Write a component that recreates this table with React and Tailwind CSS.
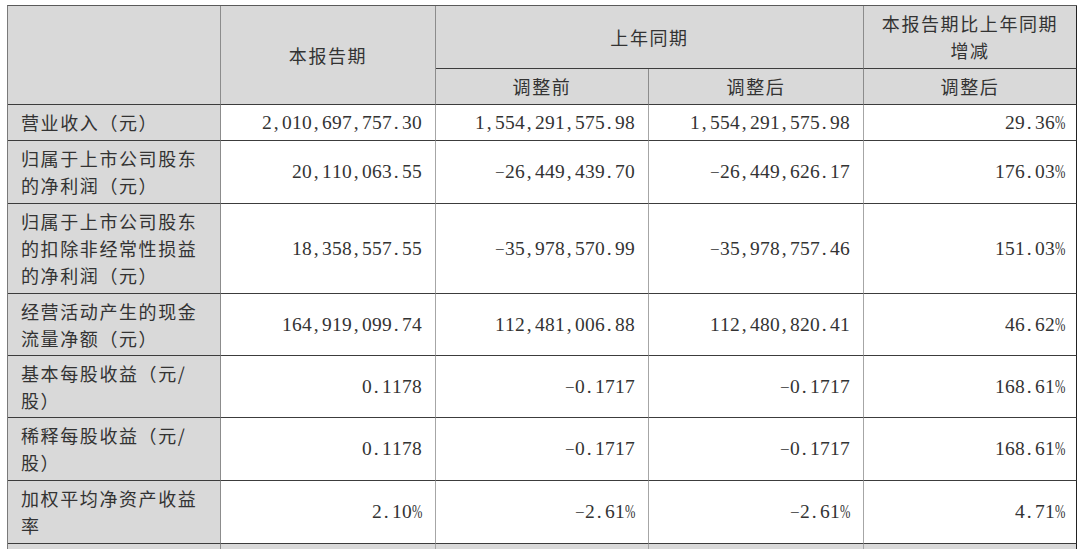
import * as React from "react";

// 主要会计数据表格
const rows = [
  {
    label: ["营业收入（元）"],
    values: ["2,010,697,757.30", "1,554,291,575.98", "1,554,291,575.98", "29.36%"],
  },
  {
    label: ["归属于上市公司股东", "的净利润（元）"],
    values: ["20,110,063.55", "−26,449,439.70", "−26,449,626.17", "176.03%"],
  },
  {
    label: ["归属于上市公司股东", "的扣除非经常性损益", "的净利润（元）"],
    values: ["18,358,557.55", "−35,978,570.99", "−35,978,757.46", "151.03%"],
  },
  {
    label: ["经营活动产生的现金", "流量净额（元）"],
    values: ["164,919,099.74", "112,481,006.88", "112,480,820.41", "46.62%"],
  },
  {
    label: ["基本每股收益（元/", "股）"],
    values: ["0.1178", "−0.1717", "−0.1717", "168.61%"],
  },
  {
    label: ["稀释每股收益（元/", "股）"],
    values: ["0.1178", "−0.1717", "−0.1717", "168.61%"],
  },
  {
    label: ["加权平均净资产收益", "率"],
    values: ["2.10%", "−2.61%", "−2.61%", "4.71%"],
  },
];

const Num = ({ value }) => (
  <span className="flex items-baseline font-['Liberation_Serif',serif] text-[19.5px] leading-none">
    {value.split("").map((c, i) => {
      if (c === "%")
        return (
          <span key={i} className="inline-block w-[10px]">
            <span className="inline-block origin-left scale-x-[0.64]">%</span>
          </span>
        );
      if (c === "−")
        return (
          <span key={i} className="inline-block w-[10px] text-center text-[17px]">
            {c}
          </span>
        );
      return (
        <span key={i} className="inline-block w-[10px] text-center">
          {c}
        </span>
      );
    })}
  </span>
);

const head =
  "bg-[#d9d9d9] border-r border-b border-r-[#8c8c8c] border-b-[#3c3c3c] flex flex-col items-center justify-center";

export default function App() {
  return (
    <div className="w-[1080px] h-[549px] overflow-hidden bg-white text-[#333333] font-['Noto_Sans_CJK_SC',sans-serif]">
      <div className="ml-[7px] mt-[5px] w-max border-l border-t border-l-[#7a7a7a] border-t-[#5a5a5a] grid grid-cols-[213px_215px_213px_215px_213px] grid-rows-[63px_36px_36px_63px_90px_62px_62px_63px_63px_40px] text-[18px] tracking-[1.6px]">
        {/* Header */}
        <div className={`${head} row-span-2`} />
        <div className={`${head} row-span-2`}>本报告期</div>
        <div className={`${head} col-span-2`}>上年同期</div>
        <div className={`${head} border-r-[#222222] leading-[27px]`}>
          <span>本报告期比上年同期</span>
          <span>增减</span>
        </div>
        <div className={head}>调整前</div>
        <div className={head}>调整后</div>
        <div className={`${head} border-r-[#222222]`}>调整后</div>

        {/* Body */}
        {rows.map((row) => (
          <React.Fragment key={row.label.join("")}>
            <div className="bg-[#d9d9d9] border-r border-b border-r-[#8c8c8c] border-b-[#3c3c3c] pl-[13px] flex flex-col justify-center leading-[27px] whitespace-nowrap">
              {row.label.map((l) => (
                <span key={l}>{l}</span>
              ))}
            </div>
            {row.values.map((v, i) => (
              <div
                key={i}
                className={`bg-white border-r border-b border-b-[#3c3c3c] flex items-center justify-end ${
                  i === 3 ? "border-r-[#222222] pr-[11px]" : "border-r-[#a6a6a6] pr-[13px]"
                }`}
              >
                <Num value={v} />
              </div>
            ))}
          </React.Fragment>
        ))}

        {/* 下一行（被截断） */}
        <div className="bg-[#d9d9d9] border-r border-r-[#8c8c8c]" />
        <div className="bg-[#d9d9d9] border-r border-r-[#a6a6a6]" />
        <div className="bg-[#d9d9d9] border-r border-r-[#a6a6a6]" />
        <div className="bg-[#d9d9d9] border-r border-r-[#a6a6a6]" />
        <div className="bg-[#d9d9d9] border-r border-r-[#222222]" />
      </div>
    </div>
  );
}
